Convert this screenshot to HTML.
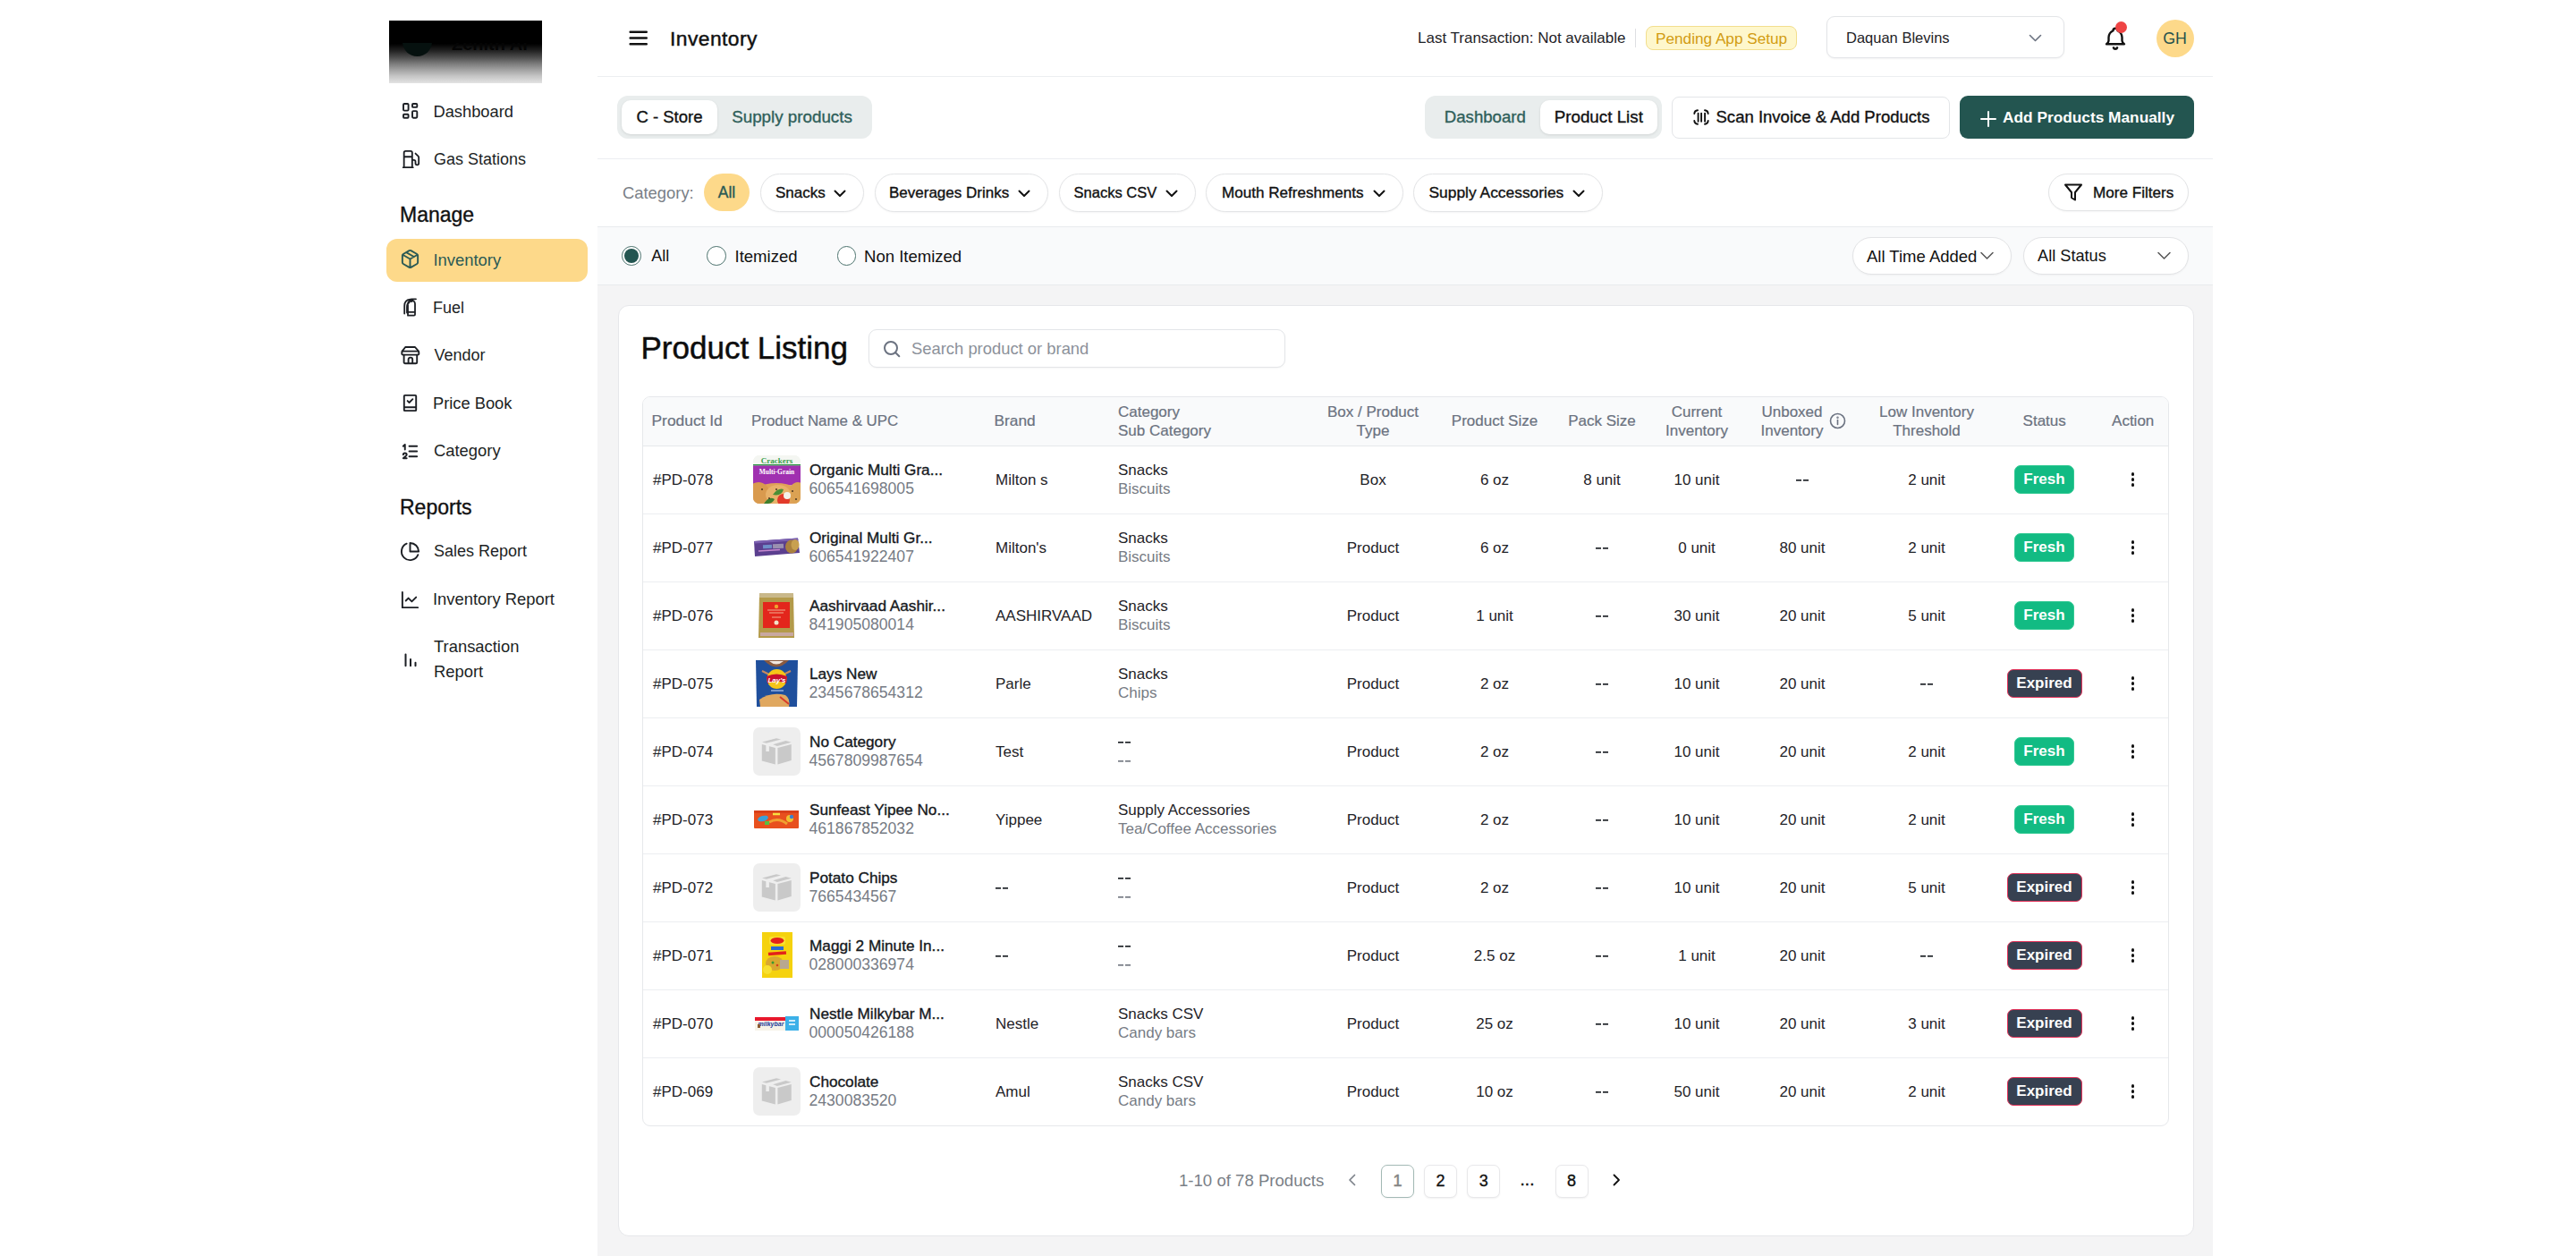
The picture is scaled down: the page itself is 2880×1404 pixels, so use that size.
<!DOCTYPE html><html><head><meta charset="utf-8"><style>
html,body{margin:0;padding:0}
body{width:2880px;height:1404px;overflow:hidden;position:relative;background:#fff;font-family:"Liberation Sans",sans-serif;}
.t{position:absolute;white-space:nowrap}
.b{position:absolute;box-sizing:border-box}
.m{-webkit-text-stroke:0.35px currentColor}
.sb{font-weight:700}
</style></head><body>
<div class="b" style="left:435px;top:23px;width:171px;height:70px;background:linear-gradient(180deg,#000 0%,#000 37%,#1e1e1e 47%,#4a4a4a 58%,#7c7c7c 69%,#a3a3a3 79%,#c6c6c6 89%,#e3e3e3 100%);"></div>
<div class="b" style="left:435px;top:48px;width:171px;height:16px;overflow:hidden"><div class="b" style="left:14.5px;top:-18.5px;width:33px;height:33px;border-radius:50%;background:#06110f"></div><div class="t sb" style="left:70px;top:-11px;font-size:20px;line-height:24px;color:#050505">Zenith AI</div></div>
<svg class="b" style="left:446px;top:110px;color:#1c1f24;stroke-width:1.9px;" width="26" height="26" viewBox="446 110 26 26" fill="none" stroke="currentColor" stroke-linecap="round" stroke-linejoin="round"><rect x="451" y="116" width="5.6" height="7.6" rx="1.1"/><rect x="461" y="116" width="5.3" height="3.9" rx="0.9"/><rect x="451" y="127.8" width="5.6" height="3.9" rx="0.9"/><rect x="461" y="124.1" width="5.3" height="7.6" rx="1.1"/></svg>
<div class="t " style="left:484.5px;top:113.3px;font-size:18.3px;line-height:23px;color:#1c1f24;">Dashboard</div>
<svg class="b" style="left:447.5px;top:166.5px;color:#1c1f24;" width="22" height="22" viewBox="0 0 24 24" fill="none" stroke="currentColor" stroke-linecap="round" stroke-linejoin="round"><path d="M3 22h12 M4 9h10 M14 22V4a2 2 0 0 0-2-2H6a2 2 0 0 0-2 2v18 M14 13h2a2 2 0 0 1 2 2v2a2 2 0 0 0 2 2a2 2 0 0 0 2-2V9.83a2 2 0 0 0-.59-1.42L18 5" stroke-width="2"/></svg>
<div class="t " style="left:485px;top:166.5px;font-size:18px;line-height:22px;color:#1c1f24;">Gas Stations</div>
<div class="t m" style="left:447px;top:225.5px;font-size:23px;line-height:29px;color:#111;">Manage</div>
<div class="b" style="left:432px;top:266.5px;width:225px;height:48.5px;background:#fdd98a;border-radius:12px;"></div>
<svg class="b" style="left:447px;top:278px;color:#2b5a55;" width="23" height="23" viewBox="0 0 24 24" fill="none" stroke="currentColor" stroke-linecap="round" stroke-linejoin="round"><path d="m7.5 4.27 9 5.15 M21 8a2 2 0 0 0-1-1.73l-7-4a2 2 0 0 0-2 0l-7 4A2 2 0 0 0 3 8v8a2 2 0 0 0 1 1.73l7 4a2 2 0 0 0 2 0l7-4A2 2 0 0 0 21 16Z M3.3 7l8.7 5 8.7-5 M12 22V12" stroke-width="2"/></svg>
<div class="t " style="left:484.5px;top:278.7px;font-size:18.4px;line-height:23px;color:#2b5a55;">Inventory</div>
<svg class="b" style="left:446px;top:328px;color:#1c1f24;stroke-width:1.8px;" width="26" height="28" viewBox="446 328 26 28" fill="none" stroke="currentColor" stroke-linecap="round" stroke-linejoin="round"><path d="M456 352.7V339.8A4 4 0 0 1 464 339.8V351.6a1.1 1.1 0 0 1-1.1 1.1H457.1a1.1 1.1 0 0 1-1.1-1.1Z M456 348.8H464 M459.8 334.3H465 M458.6 334.6Q452.2 335.2 452.2 342V350.6 M455 349.5V343.2Q455 339.2 457.8 337.6"/><circle cx="459.8" cy="336" r="1.2"/></svg>
<div class="t " style="left:484px;top:332.8px;font-size:18px;line-height:22px;color:#1c1f24;">Fuel</div>
<svg class="b" style="left:446px;top:384px;color:#1c1f24;stroke-width:1.9px;" width="25" height="25" viewBox="446 384 25 25" fill="none" stroke="currentColor" stroke-linecap="round" stroke-linejoin="round"><path d="M449.6 392.6L453.2 388H464L468 392.6 M451.6 396.6V405a1.3 1.3 0 0 0 1.3 1.3H464.9a1.3 1.3 0 0 0 1.3-1.3V396.6 M456.6 406.3V401.9a2.3 2.3 0 0 1 4.6 0V406.3"/><rect x="449.3" y="392.6" width="19" height="4" rx="1.2"/></svg>
<div class="t " style="left:485.5px;top:386.4px;font-size:18px;line-height:22px;color:#1c1f24;">Vendor</div>
<svg class="b" style="left:447px;top:439px;color:#1c1f24;" width="23" height="23" viewBox="0 0 24 24" fill="none" stroke="currentColor" stroke-linecap="round" stroke-linejoin="round"><path d="M5 4a1 1 0 0 1 1-1h12a1 1 0 0 1 1 1v16a1 1 0 0 1-1 1H6a1 1 0 0 1-1-1z M5 17h14 M9 9.5l2 2 4-4" stroke-width="2"/></svg>
<div class="t " style="left:484px;top:438.8px;font-size:18.3px;line-height:23px;color:#1c1f24;">Price Book</div>
<svg class="b" style="left:447px;top:493px;color:#1c1f24;" width="23" height="23" viewBox="0 0 24 24" fill="none" stroke="currentColor" stroke-linecap="round" stroke-linejoin="round"><path d="M11 6h9 M11 12h9 M11 18h9 M4 16a2 2 0 1 1 4 0c0 .6-.5 1-1 1.5L4 20h4 M6 10V4L4 6" stroke-width="2"/></svg>
<div class="t " style="left:485px;top:492.3px;font-size:18.4px;line-height:23px;color:#1c1f24;">Category</div>
<div class="t m" style="left:447px;top:552.5px;font-size:23px;line-height:29px;color:#111;">Reports</div>
<svg class="b" style="left:447px;top:605px;color:#1c1f24;" width="23" height="23" viewBox="0 0 24 24" fill="none" stroke="currentColor" stroke-linecap="round" stroke-linejoin="round"><path d="M21.21 15.89A10 10 0 1 1 8 2.83 M22 12A10 10 0 0 0 12 2v10z" stroke-width="2"/></svg>
<div class="t " style="left:485px;top:605.3px;font-size:18px;line-height:22px;color:#1c1f24;">Sales Report</div>
<svg class="b" style="left:447px;top:659px;color:#1c1f24;" width="23" height="23" viewBox="0 0 24 24" fill="none" stroke="currentColor" stroke-linecap="round" stroke-linejoin="round"><path d="M3 3v18h18 M19 9l-5 5-4-4-3 3" stroke-width="2"/></svg>
<div class="t " style="left:484px;top:658.3px;font-size:18.4px;line-height:23px;color:#1c1f24;">Inventory Report</div>
<svg class="b" style="left:448px;top:726px;color:#1c1f24;" width="22" height="22" viewBox="0 0 24 24" fill="none" stroke="currentColor" stroke-linecap="round" stroke-linejoin="round"><path d="M6 20V6 M12 20v-8 M18 20v-4" stroke-width="2.2"/></svg>
<div class="t " style="left:485px;top:711.4px;font-size:18.4px;line-height:23px;color:#1c1f24;">Transaction</div>
<div class="t " style="left:485px;top:738.5px;font-size:18.4px;line-height:23px;color:#1c1f24;">Report</div>
<div class="b" style="left:668px;top:318px;width:1806px;height:1086px;background:#f4f4f5;"></div>
<div class="b" style="left:668px;top:253px;width:1806px;height:66px;background:#f9fafb;border-top:1px solid #e8eaed;border-bottom:1px solid #e8eaed;"></div>
<div class="b" style="left:668px;top:85px;width:1806px;height:1px;background:#eceef1;"></div>
<div class="b" style="left:668px;top:177px;width:1806px;height:1px;background:#eceef1;"></div>
<svg class="b" style="left:700px;top:29px;color:#111;" width="27" height="27" viewBox="0 0 24 24" fill="none" stroke="currentColor" stroke-linecap="round" stroke-linejoin="round"><path d="M4.1 6h16.2 M4.1 12h16.2 M4.1 18h16.2" stroke-width="2.1"/></svg>
<div class="t m" style="left:749px;top:28.5px;font-size:22.8px;line-height:28px;color:#111;letter-spacing:0.45px;-webkit-text-stroke:0.45px #111;">Inventory</div>
<div class="t " style="left:1585px;top:31.5px;font-size:17px;line-height:21px;color:#1f2328;">Last Transaction: Not available</div>
<div class="b" style="left:1828px;top:32px;width:1px;height:21px;background:#dedfe2;"></div>
<div class="b" style="left:1840px;top:29px;width:169px;height:27px;background:#fef7cc;border:1px solid #f2de8d;border-radius:8px;"></div>
<div class="t " style="left:1851px;top:31.5px;font-size:17.2px;line-height:22px;color:#d29c12;">Pending App Setup</div>
<div class="b" style="left:2042px;top:18px;width:266px;height:47px;background:#fff;border:1px solid #e3e5e8;border-radius:9px;box-shadow:0 1px 2px rgba(0,0,0,.05);"></div>
<div class="t " style="left:2064px;top:32.0px;font-size:16.5px;line-height:21px;color:#1f2328;">Daquan Blevins</div>
<svg class="b" style="left:2266px;top:35px;color:#6b7280;" width="19" height="15" viewBox="0 0 19 15" fill="none" stroke="currentColor" stroke-linecap="round" stroke-linejoin="round"><path d="M3.5 4.5l6 6 6-6" stroke-width="1.6"/></svg>
<svg class="b" style="left:2350px;top:28px;color:#111;" width="30" height="30" viewBox="0 0 24 24" fill="none" stroke="currentColor" stroke-linecap="round" stroke-linejoin="round"><path d="M10 5a2 2 0 1 1 4 0a7 7 0 0 1 4 6v3a4 4 0 0 0 2 3h-16a4 4 0 0 0 2-3v-3a7 7 0 0 1 4-6 M10.3 20.2a1.8 1.8 0 0 0 3.4 0" stroke-width="1.9"/></svg>
<div class="b" style="left:2365px;top:24px;width:13px;height:13px;background:#ef4444;border-radius:50%;"></div>
<div class="b" style="left:2410.5px;top:21.5px;width:42.0px;height:42.0px;background:#fdd98a;border-radius:50%;"></div>
<div class="t " style="left:1931.5px;width:1000px;text-align:center;top:31.5px;font-size:17.8px;line-height:22px;color:#24514d;">GH</div>
<div class="b" style="left:690px;top:107px;width:285px;height:48px;background:#e9eded;border-radius:12px;"></div>
<div class="b" style="left:695px;top:112px;width:107px;height:38px;background:#fff;border-radius:10px;box-shadow:0 1px 3px rgba(0,0,0,.10);"></div>
<div class="t m" style="left:248.5px;width:1000px;text-align:center;top:119.3px;font-size:18.5px;line-height:23px;color:#111;">C - Store</div>
<div class="t m" style="left:385.5px;width:1000px;text-align:center;top:118.8px;font-size:18.8px;line-height:24px;color:#2f5f5a;">Supply products</div>
<div class="b" style="left:1593px;top:107px;width:265px;height:48px;background:#e9eded;border-radius:12px;"></div>
<div class="b" style="left:1721.5px;top:112px;width:131.5px;height:38px;background:#fff;border-radius:10px;box-shadow:0 1px 3px rgba(0,0,0,.10);"></div>
<div class="t m" style="left:1160.3px;width:1000px;text-align:center;top:119.3px;font-size:18.6px;line-height:23px;color:#2f5f5a;">Dashboard</div>
<div class="t m" style="left:1287.3px;width:1000px;text-align:center;top:118.8px;font-size:18.8px;line-height:24px;color:#111;">Product List</div>
<div class="b" style="left:1869px;top:107.5px;width:311px;height:47.5px;background:#fff;border:1px solid #e3e5e8;border-radius:8px;"></div>
<svg class="b" style="left:1893px;top:122px;color:#111;" width="18" height="18" viewBox="0 0 18 18" fill="none" stroke="currentColor" stroke-linecap="round" stroke-linejoin="round"><path d="M1.3 5A4 4 0 0 1 5 1.3 M13 1.3A4 4 0 0 1 16.7 5 M1.3 13A4 4 0 0 0 5 16.7 M13 16.7A4 4 0 0 0 16.7 13 M5.6 4.6v9.2 M9.1 4.6v9.2 M13.1 4.6v9.2" stroke-width="1.9"/></svg>
<div class="t m" style="left:1918.5px;top:119.3px;font-size:18.55px;line-height:23px;color:#111;">Scan Invoice &amp; Add Products</div>
<div class="b" style="left:2191px;top:107px;width:262px;height:48px;background:#235550;border-radius:9px;"></div>
<svg class="b" style="left:2212px;top:122px;color:#fff;" width="22" height="22" viewBox="0 0 22 22" fill="none" stroke="currentColor" stroke-linecap="round" stroke-linejoin="round"><path d="M11 3v16 M3 11h16" stroke-width="2"/></svg>
<div class="t sb" style="left:2239px;top:119.8px;font-size:17.3px;line-height:22px;color:#fff;">Add Products Manually</div>
<div class="t " style="left:696px;top:203.8px;font-size:18.4px;line-height:23px;color:#7a7f87;">Category:</div>
<div class="b" style="left:787px;top:194px;width:51px;height:42px;background:#fdd98a;border-radius:21px;"></div>
<div class="t m" style="left:312.5px;width:1000px;text-align:center;top:204.3px;font-size:17.5px;line-height:22px;color:#2b5a55;">All</div>
<div class="b" style="left:849.5px;top:194px;width:116.5px;height:42.5px;background:#fff;border:1px solid #e3e4e6;border-radius:22px;box-shadow:0 1px 2px rgba(0,0,0,.04);"></div>
<div class="t m" style="left:867.0px;top:204.8px;font-size:17px;line-height:21px;color:#111;">Snacks</div>
<svg class="b" style="left:930px;top:207px;color:#111;" width="18" height="18" viewBox="0 0 18 18" fill="none" stroke="currentColor" stroke-linecap="round" stroke-linejoin="round"><path d="M3.5 6.5l5.5 5.5 5.5-5.5" stroke-width="2"/></svg>
<div class="b" style="left:978px;top:194px;width:194px;height:42.5px;background:#fff;border:1px solid #e3e4e6;border-radius:22px;box-shadow:0 1px 2px rgba(0,0,0,.04);"></div>
<div class="t m" style="left:994px;top:204.8px;font-size:17px;line-height:21px;color:#111;">Beverages Drinks</div>
<svg class="b" style="left:1136px;top:207px;color:#111;" width="18" height="18" viewBox="0 0 18 18" fill="none" stroke="currentColor" stroke-linecap="round" stroke-linejoin="round"><path d="M3.5 6.5l5.5 5.5 5.5-5.5" stroke-width="2"/></svg>
<div class="b" style="left:1184px;top:194px;width:153px;height:42.5px;background:#fff;border:1px solid #e3e4e6;border-radius:22px;box-shadow:0 1px 2px rgba(0,0,0,.04);"></div>
<div class="t m" style="left:1200.6px;top:204.8px;font-size:16.5px;line-height:21px;color:#111;">Snacks CSV</div>
<svg class="b" style="left:1301px;top:207px;color:#111;" width="18" height="18" viewBox="0 0 18 18" fill="none" stroke="currentColor" stroke-linecap="round" stroke-linejoin="round"><path d="M3.5 6.5l5.5 5.5 5.5-5.5" stroke-width="2"/></svg>
<div class="b" style="left:1348px;top:194px;width:221px;height:42.5px;background:#fff;border:1px solid #e3e4e6;border-radius:22px;box-shadow:0 1px 2px rgba(0,0,0,.04);"></div>
<div class="t m" style="left:1365.9px;top:204.8px;font-size:17.1px;line-height:21px;color:#111;">Mouth Refreshments</div>
<svg class="b" style="left:1533px;top:207px;color:#111;" width="18" height="18" viewBox="0 0 18 18" fill="none" stroke="currentColor" stroke-linecap="round" stroke-linejoin="round"><path d="M3.5 6.5l5.5 5.5 5.5-5.5" stroke-width="2"/></svg>
<div class="b" style="left:1580px;top:194px;width:212px;height:42.5px;background:#fff;border:1px solid #e3e4e6;border-radius:22px;box-shadow:0 1px 2px rgba(0,0,0,.04);"></div>
<div class="t m" style="left:1597.5px;top:204.3px;font-size:17.4px;line-height:22px;color:#111;">Supply Accessories</div>
<svg class="b" style="left:1756px;top:207px;color:#111;" width="18" height="18" viewBox="0 0 18 18" fill="none" stroke="currentColor" stroke-linecap="round" stroke-linejoin="round"><path d="M3.5 6.5l5.5 5.5 5.5-5.5" stroke-width="2"/></svg>
<div class="b" style="left:2290px;top:194px;width:157px;height:42px;background:#fff;border:1px solid #e3e4e6;border-radius:22px;box-shadow:0 1px 2px rgba(0,0,0,.04);"></div>
<svg class="b" style="left:2306px;top:203px;color:#111;" width="24" height="24" viewBox="0 0 24 24" fill="none" stroke="currentColor" stroke-linecap="round" stroke-linejoin="round"><path d="M3 3.5h18l-7 8.5v8.5l-4-2.5v-6z" stroke-width="2"/></svg>
<div class="t m" style="left:2340px;top:204.8px;font-size:17.1px;line-height:21px;color:#111;">More Filters</div>
<div class="b" style="left:695.0px;top:275.0px;width:21.600000000000023px;height:21.600000000000023px;border:1.5px solid #4a716c;border-radius:50%;background:#fff;"></div>
<div class="b" style="left:697.6px;top:277.6px;width:16.399999999999977px;height:16.399999999999977px;background:#235550;border-radius:50%;"></div>
<div class="t " style="left:728.3px;top:275.0px;font-size:18px;line-height:22px;color:#111;">All</div>
<div class="b" style="left:790.2px;top:275.0px;width:21.59999999999991px;height:21.600000000000023px;border:1.6px solid #4a716c;border-radius:50%;background:#fff;"></div>
<div class="t " style="left:821.5px;top:274.5px;font-size:18.55px;line-height:23px;color:#111;">Itemized</div>
<div class="b" style="left:935.5px;top:275.0px;width:21.59999999999991px;height:21.600000000000023px;border:1.6px solid #4a716c;border-radius:50%;background:#fff;"></div>
<div class="t " style="left:966px;top:274.5px;font-size:18.55px;line-height:23px;color:#111;">Non Itemized</div>
<div class="b" style="left:2071px;top:265px;width:178px;height:41.5px;background:#fff;border:1px solid #e3e4e6;border-radius:21px;box-shadow:0 1px 2px rgba(0,0,0,.04);"></div>
<div class="t " style="left:2087px;top:274.5px;font-size:18.5px;line-height:23px;color:#111;">All Time Added</div>
<svg class="b" style="left:2212px;top:278px;color:#555;" width="19" height="15" viewBox="0 0 19 15" fill="none" stroke="currentColor" stroke-linecap="round" stroke-linejoin="round"><path d="M3 4.5l6.5 6.5 6.5-6.5" stroke-width="1.5"/></svg>
<div class="b" style="left:2262px;top:265px;width:184.5px;height:41.5px;background:#fff;border:1px solid #e3e4e6;border-radius:21px;box-shadow:0 1px 2px rgba(0,0,0,.04);"></div>
<div class="t " style="left:2278px;top:274.5px;font-size:18.2px;line-height:23px;color:#111;">All Status</div>
<svg class="b" style="left:2410px;top:278px;color:#555;" width="19" height="15" viewBox="0 0 19 15" fill="none" stroke="currentColor" stroke-linecap="round" stroke-linejoin="round"><path d="M3 4.5l6.5 6.5 6.5-6.5" stroke-width="1.5"/></svg>
<div class="b" style="left:690.5px;top:340.5px;width:1762.0px;height:1041.0px;background:#fff;border:1px solid #e6e7ea;border-radius:12px;"></div>
<div class="t m" style="left:716.5px;top:367.0px;font-size:35px;line-height:44px;color:#0d0d0d;-webkit-text-stroke:0.5px #0d0d0d;">Product Listing</div>
<div class="b" style="left:971px;top:368px;width:466px;height:42.5px;background:#fff;border:1px solid #e3e5e8;border-radius:9px;box-shadow:0 1px 2px rgba(0,0,0,.04);"></div>
<svg class="b" style="left:985px;top:378px;color:#6b7280;stroke-width:2;" width="24" height="24" viewBox="0 0 24 24" fill="none" stroke="currentColor" stroke-linecap="round" stroke-linejoin="round"><circle cx="11" cy="11" r="7"/><path d="M20.3 20.3l-4.3-4.3" /></svg>
<div class="t " style="left:1019px;top:377.7px;font-size:18.4px;line-height:23px;color:#8c919a;">Search product or brand</div>
<div class="b" style="left:718px;top:443px;width:1707px;height:815.5px;background:#fff;border:1px solid #e6e8eb;border-radius:9px;overflow:hidden;"></div>
<div class="b" style="left:719px;top:444px;width:1705px;height:54.5px;background:#f9fafb;border-radius:8px 8px 0 0;border-bottom:1px solid #e6e8eb;"></div>
<div class="t m" style="left:728.5px;top:459.2px;font-size:17.4px;line-height:22px;color:#6b7280;-webkit-text-stroke:0.2px;">Product Id</div>
<div class="t m" style="left:840px;top:459.7px;font-size:16.9px;line-height:21px;color:#6b7280;-webkit-text-stroke:0.2px;">Product Name &amp; UPC</div>
<div class="t m" style="left:1111.5px;top:459.2px;font-size:17.3px;line-height:22px;color:#6b7280;-webkit-text-stroke:0.2px;">Brand</div>
<div class="t m" style="left:1250px;top:449.5px;font-size:17px;line-height:21px;color:#6b7280;-webkit-text-stroke:0.2px;">Category</div>
<div class="t m" style="left:1250px;top:470.5px;font-size:17px;line-height:21px;color:#6b7280;-webkit-text-stroke:0.2px;">Sub Category</div>
<div class="t m" style="left:1035px;width:1000px;text-align:center;top:449.5px;font-size:17px;line-height:21px;color:#6b7280;-webkit-text-stroke:0.2px;">Box / Product</div>
<div class="t m" style="left:1035px;width:1000px;text-align:center;top:470.5px;font-size:17px;line-height:21px;color:#6b7280;-webkit-text-stroke:0.2px;">Type</div>
<div class="t m" style="left:1397px;width:1000px;text-align:center;top:449.5px;font-size:17px;line-height:21px;color:#6b7280;-webkit-text-stroke:0.2px;">Current</div>
<div class="t m" style="left:1397px;width:1000px;text-align:center;top:470.5px;font-size:17px;line-height:21px;color:#6b7280;-webkit-text-stroke:0.2px;">Inventory</div>
<div class="t m" style="left:1503.5px;width:1000px;text-align:center;top:449.5px;font-size:17px;line-height:21px;color:#6b7280;-webkit-text-stroke:0.2px;">Unboxed</div>
<div class="t m" style="left:1503.5px;width:1000px;text-align:center;top:470.5px;font-size:17px;line-height:21px;color:#6b7280;-webkit-text-stroke:0.2px;">Inventory</div>
<div class="t m" style="left:1654px;width:1000px;text-align:center;top:449.5px;font-size:17px;line-height:21px;color:#6b7280;-webkit-text-stroke:0.2px;">Low Inventory</div>
<div class="t m" style="left:1654px;width:1000px;text-align:center;top:470.5px;font-size:17px;line-height:21px;color:#6b7280;-webkit-text-stroke:0.2px;">Threshold</div>
<div class="t m" style="left:1171px;width:1000px;text-align:center;top:459.7px;font-size:17px;line-height:21px;color:#6b7280;-webkit-text-stroke:0.2px;">Product Size</div>
<div class="t m" style="left:1291px;width:1000px;text-align:center;top:459.7px;font-size:17px;line-height:21px;color:#6b7280;-webkit-text-stroke:0.2px;">Pack Size</div>
<div class="t m" style="left:1785.6999999999998px;width:1000px;text-align:center;top:459.7px;font-size:17px;line-height:21px;color:#6b7280;-webkit-text-stroke:0.2px;">Status</div>
<div class="t m" style="left:1884.6999999999998px;width:1000px;text-align:center;top:459.7px;font-size:17px;line-height:21px;color:#6b7280;-webkit-text-stroke:0.2px;">Action</div>
<svg class="b" style="left:2045px;top:461px;color:#6b7280;stroke-width:1.6;" width="19" height="19" viewBox="0 0 19 19" fill="none" stroke="currentColor" stroke-linecap="round" stroke-linejoin="round"><circle cx="9.5" cy="9.5" r="8"/><path d="M9.5 8.5v5" /><circle cx="9.5" cy="5.8" r="0.4" fill="currentColor"/></svg>
<div class="b" style="left:719px;top:573.5px;width:1705px;height:1.0px;background:#eceef1;"></div>
<div class="t " style="left:730px;top:525.5px;font-size:17px;line-height:21px;color:#1f2328;">#PD-078</div>
<svg class="b" style="left:842px;top:509px" width="53" height="54" viewBox="0 0 53 54">
<defs><clipPath id="cr"><rect x="0" y="0" width="53" height="54" rx="7"/></clipPath></defs>
<g clip-path="url(#cr)">
<rect width="53" height="54" fill="#f2f4ef"/>
<rect y="0" width="53" height="10" fill="#f4f6f2"/>
<text x="26.5" y="8.5" font-family="Liberation Serif" font-size="9" fill="#3aa04a" text-anchor="middle" font-weight="700">Crackers</text>
<rect y="10" width="53" height="1.6" fill="#2d9a45"/>
<rect y="11.5" width="53" height="22" fill="#a030b0"/>
<text x="26.5" y="21" font-family="Liberation Serif" font-size="7.5" fill="#fff" text-anchor="middle" font-weight="700">Multi-Grain</text>
<ellipse cx="26" cy="46" rx="30" ry="15" fill="#e0a258"/>
<ellipse cx="6" cy="42" rx="12" ry="12" fill="#d99a4e"/>
<ellipse cx="50" cy="42" rx="10" ry="12" fill="#dba253"/>
<ellipse cx="28" cy="44" rx="14" ry="11" fill="#e8b26a"/>
<circle cx="34" cy="50" r="7" fill="#e23a2a"/>
<circle cx="38" cy="45" r="4" fill="#f4f2ea"/>
<path d="M22 44 q6 -8 12 -6 q-2 8 -12 6z" fill="#4a8f35"/>
<path d="M12 54 q6 -9 12 -5 q-3 6 -12 5z" fill="#3f7f2e"/>
<circle cx="10" cy="38" r="0.9" fill="#3a2a1a"/><circle cx="18" cy="48" r="0.9" fill="#3a2a1a"/><circle cx="44" cy="40" r="0.9" fill="#3a2a1a"/><circle cx="48" cy="49" r="0.9" fill="#3a2a1a"/><circle cx="26" cy="38" r="0.9" fill="#3a2a1a"/>
</g></svg>
<div class="t m" style="left:905px;top:514.2px;font-size:17.2px;line-height:22px;color:#15181c;">Organic Multi Gra...</div>
<div class="t " style="left:904.5px;top:535.0px;font-size:17.6px;line-height:22px;color:#767b84;">606541698005</div>
<div class="t " style="left:1113px;top:525.5px;font-size:17px;line-height:21px;color:#1f2328;">Milton s</div>
<div class="t " style="left:1250px;top:514.7px;font-size:17px;line-height:21px;color:#1f2328;">Snacks</div>
<div class="t " style="left:1250px;top:535.5px;font-size:17px;line-height:21px;color:#767b84;">Biscuits</div>
<div class="t " style="left:1035px;width:1000px;text-align:center;top:525.5px;font-size:17px;line-height:21px;color:#1f2328;">Box</div>
<div class="t " style="left:1171px;width:1000px;text-align:center;top:525.5px;font-size:17px;line-height:21px;color:#1f2328;">6 oz</div>
<div class="t " style="left:1291px;width:1000px;text-align:center;top:525.5px;font-size:17px;line-height:21px;color:#1f2328;">8 unit</div>
<div class="t " style="left:1397px;width:1000px;text-align:center;top:525.5px;font-size:17px;line-height:21px;color:#1f2328;">10 unit</div>
<div class="t " style="left:1515px;width:1000px;text-align:center;top:525.5px;font-size:17px;line-height:21px;color:#1f2328;"><span style="display:inline-block;width:14px;height:12px;vertical-align:baseline;background:linear-gradient(currentColor,currentColor) 0 6.3px/6px 1.7px no-repeat,linear-gradient(currentColor,currentColor) 7.6px 6.3px/6px 1.7px no-repeat"></span></div>
<div class="t " style="left:1654px;width:1000px;text-align:center;top:525.5px;font-size:17px;line-height:21px;color:#1f2328;">2 unit</div>
<div class="b" style="left:2252px;top:519.8px;width:67px;height:32.0px;background:#12bb83;border:1px solid #34ca94;border-radius:7px;"></div>
<div class="t sb" style="left:1785.5px;width:1000px;text-align:center;top:524.8px;font-size:17px;line-height:21px;color:#fff;">Fresh</div>
<div class="b" style="left:2382.6px;top:528.15px;width:3.800000000000182px;height:3.900000000000091px;background:#111;border-radius:50%;"></div>
<div class="b" style="left:2382.6px;top:534.05px;width:3.800000000000182px;height:3.900000000000091px;background:#111;border-radius:50%;"></div>
<div class="b" style="left:2382.6px;top:539.9499999999999px;width:3.800000000000182px;height:3.900000000000091px;background:#111;border-radius:50%;"></div>
<div class="b" style="left:719px;top:649.5px;width:1705px;height:1.0px;background:#eceef1;"></div>
<div class="t " style="left:730px;top:601.5px;font-size:17px;line-height:21px;color:#1f2328;">#PD-077</div>
<svg class="b" style="left:842px;top:600px" width="53" height="24" viewBox="0 0 53 24">
<path d="M1 5 L50 1.5 L52 18 L2 22 Z" fill="#5b3f8f"/>
<path d="M1 5 L50 1.5 L50.5 4 L1.5 7.5Z" fill="#7a5fb0"/>
<rect x="11" y="9" width="10" height="4" fill="#6f8fc8" transform="rotate(-3 16 11)"/>
<rect x="22" y="8" width="12" height="5" fill="#9a90b0" transform="rotate(-3 28 10)"/>
<path d="M6 16 L30 14.5" stroke="#c88bd0" stroke-width="1.5"/>
<ellipse cx="43" cy="11" rx="7" ry="7.5" fill="#a9803f"/>
<ellipse cx="47" cy="9" rx="4.5" ry="6" fill="#c8a050"/>
</svg>
<div class="t m" style="left:905px;top:590.2px;font-size:17.2px;line-height:22px;color:#15181c;">Original Multi Gr...</div>
<div class="t " style="left:904.5px;top:611.0px;font-size:17.6px;line-height:22px;color:#767b84;">606541922407</div>
<div class="t " style="left:1113px;top:601.5px;font-size:17px;line-height:21px;color:#1f2328;">Milton's</div>
<div class="t " style="left:1250px;top:590.7px;font-size:17px;line-height:21px;color:#1f2328;">Snacks</div>
<div class="t " style="left:1250px;top:611.5px;font-size:17px;line-height:21px;color:#767b84;">Biscuits</div>
<div class="t " style="left:1035px;width:1000px;text-align:center;top:601.5px;font-size:17px;line-height:21px;color:#1f2328;">Product</div>
<div class="t " style="left:1171px;width:1000px;text-align:center;top:601.5px;font-size:17px;line-height:21px;color:#1f2328;">6 oz</div>
<div class="t " style="left:1291px;width:1000px;text-align:center;top:601.5px;font-size:17px;line-height:21px;color:#1f2328;"><span style="display:inline-block;width:14px;height:12px;vertical-align:baseline;background:linear-gradient(currentColor,currentColor) 0 6.3px/6px 1.7px no-repeat,linear-gradient(currentColor,currentColor) 7.6px 6.3px/6px 1.7px no-repeat"></span></div>
<div class="t " style="left:1397px;width:1000px;text-align:center;top:601.5px;font-size:17px;line-height:21px;color:#1f2328;">0 unit</div>
<div class="t " style="left:1515px;width:1000px;text-align:center;top:601.5px;font-size:17px;line-height:21px;color:#1f2328;">80 unit</div>
<div class="t " style="left:1654px;width:1000px;text-align:center;top:601.5px;font-size:17px;line-height:21px;color:#1f2328;">2 unit</div>
<div class="b" style="left:2252px;top:595.8px;width:67px;height:32.0px;background:#12bb83;border:1px solid #34ca94;border-radius:7px;"></div>
<div class="t sb" style="left:1785.5px;width:1000px;text-align:center;top:600.8px;font-size:17px;line-height:21px;color:#fff;">Fresh</div>
<div class="b" style="left:2382.6px;top:604.15px;width:3.800000000000182px;height:3.900000000000091px;background:#111;border-radius:50%;"></div>
<div class="b" style="left:2382.6px;top:610.05px;width:3.800000000000182px;height:3.900000000000091px;background:#111;border-radius:50%;"></div>
<div class="b" style="left:2382.6px;top:615.9499999999999px;width:3.800000000000182px;height:3.900000000000091px;background:#111;border-radius:50%;"></div>
<div class="b" style="left:719px;top:725.5px;width:1705px;height:1.0px;background:#eceef1;"></div>
<div class="t " style="left:730px;top:677.5px;font-size:17px;line-height:21px;color:#1f2328;">#PD-076</div>
<svg class="b" style="left:842px;top:661px" width="53" height="54" viewBox="0 0 53 54">
<path d="M7 2 L45 2 L46 52 L6 52 Z" fill="#b39a4a"/>
<rect x="7" y="2" width="38" height="5" fill="#c9b88a"/>
<rect x="8" y="46" width="37" height="4" fill="#c8a8a0"/>
<rect x="11" y="12" width="30" height="29" fill="#e3261c"/>
<circle cx="26" cy="17" r="2.2" fill="#f0a030"/>
<path d="M16 21h20 M18 24h16 M21 29h10" stroke="#f6d0b0" stroke-width="0.8"/>
<circle cx="26" cy="35" r="2.5" fill="#f2e2c8"/>
</svg>
<div class="t m" style="left:905px;top:666.2px;font-size:17.2px;line-height:22px;color:#15181c;">Aashirvaad Aashir...</div>
<div class="t " style="left:904.5px;top:687.0px;font-size:17.6px;line-height:22px;color:#767b84;">841905080014</div>
<div class="t " style="left:1113px;top:677.5px;font-size:17px;line-height:21px;color:#1f2328;">AASHIRVAAD</div>
<div class="t " style="left:1250px;top:666.7px;font-size:17px;line-height:21px;color:#1f2328;">Snacks</div>
<div class="t " style="left:1250px;top:687.5px;font-size:17px;line-height:21px;color:#767b84;">Biscuits</div>
<div class="t " style="left:1035px;width:1000px;text-align:center;top:677.5px;font-size:17px;line-height:21px;color:#1f2328;">Product</div>
<div class="t " style="left:1171px;width:1000px;text-align:center;top:677.5px;font-size:17px;line-height:21px;color:#1f2328;">1 unit</div>
<div class="t " style="left:1291px;width:1000px;text-align:center;top:677.5px;font-size:17px;line-height:21px;color:#1f2328;"><span style="display:inline-block;width:14px;height:12px;vertical-align:baseline;background:linear-gradient(currentColor,currentColor) 0 6.3px/6px 1.7px no-repeat,linear-gradient(currentColor,currentColor) 7.6px 6.3px/6px 1.7px no-repeat"></span></div>
<div class="t " style="left:1397px;width:1000px;text-align:center;top:677.5px;font-size:17px;line-height:21px;color:#1f2328;">30 unit</div>
<div class="t " style="left:1515px;width:1000px;text-align:center;top:677.5px;font-size:17px;line-height:21px;color:#1f2328;">20 unit</div>
<div class="t " style="left:1654px;width:1000px;text-align:center;top:677.5px;font-size:17px;line-height:21px;color:#1f2328;">5 unit</div>
<div class="b" style="left:2252px;top:671.8px;width:67px;height:32.0px;background:#12bb83;border:1px solid #34ca94;border-radius:7px;"></div>
<div class="t sb" style="left:1785.5px;width:1000px;text-align:center;top:676.8px;font-size:17px;line-height:21px;color:#fff;">Fresh</div>
<div class="b" style="left:2382.6px;top:680.15px;width:3.800000000000182px;height:3.900000000000091px;background:#111;border-radius:50%;"></div>
<div class="b" style="left:2382.6px;top:686.05px;width:3.800000000000182px;height:3.900000000000091px;background:#111;border-radius:50%;"></div>
<div class="b" style="left:2382.6px;top:691.9499999999999px;width:3.800000000000182px;height:3.900000000000091px;background:#111;border-radius:50%;"></div>
<div class="b" style="left:719px;top:801.5px;width:1705px;height:1.0px;background:#eceef1;"></div>
<div class="t " style="left:730px;top:753.5px;font-size:17px;line-height:21px;color:#1f2328;">#PD-075</div>
<svg class="b" style="left:842px;top:737px" width="53" height="54" viewBox="0 0 53 54">
<path d="M3 1 L50 1 L49 53 L4 53 Z" fill="#1f4f9c"/>
<path d="M12 1 Q26 16 40 1 Z" fill="#8a5a40"/>
<path d="M18 2 Q26 9 34 2 Z" fill="#f2e8e0"/>
<path d="M10 13 L18 17 M42 13 L34 17" stroke="#c68a60" stroke-width="2"/>
<circle cx="26.5" cy="22" r="11" fill="#f5c518"/>
<path d="M15 19 Q26 14 38 19 L37 27 Q26 22 16 27 Z" fill="#c8102e"/>
<text x="26.5" y="25.5" font-family="Liberation Sans" font-size="8" font-weight="700" fill="#fff" text-anchor="middle" font-style="italic">Lay's</text>
<path d="M20 35 h14" stroke="#cfe0ff" stroke-width="1"/>
<path d="M7 45 Q20 36 36 40 Q42 44 40 53 L8 53 Z" fill="#e0a860"/>
<path d="M30 42 L40 50" stroke="#d83a2a" stroke-width="2"/>
</svg>
<div class="t m" style="left:905px;top:742.2px;font-size:17.2px;line-height:22px;color:#15181c;">Lays New</div>
<div class="t " style="left:904.5px;top:763.0px;font-size:17.6px;line-height:22px;color:#767b84;">2345678654312</div>
<div class="t " style="left:1113px;top:753.5px;font-size:17px;line-height:21px;color:#1f2328;">Parle</div>
<div class="t " style="left:1250px;top:742.7px;font-size:17px;line-height:21px;color:#1f2328;">Snacks</div>
<div class="t " style="left:1250px;top:763.5px;font-size:17px;line-height:21px;color:#767b84;">Chips</div>
<div class="t " style="left:1035px;width:1000px;text-align:center;top:753.5px;font-size:17px;line-height:21px;color:#1f2328;">Product</div>
<div class="t " style="left:1171px;width:1000px;text-align:center;top:753.5px;font-size:17px;line-height:21px;color:#1f2328;">2 oz</div>
<div class="t " style="left:1291px;width:1000px;text-align:center;top:753.5px;font-size:17px;line-height:21px;color:#1f2328;"><span style="display:inline-block;width:14px;height:12px;vertical-align:baseline;background:linear-gradient(currentColor,currentColor) 0 6.3px/6px 1.7px no-repeat,linear-gradient(currentColor,currentColor) 7.6px 6.3px/6px 1.7px no-repeat"></span></div>
<div class="t " style="left:1397px;width:1000px;text-align:center;top:753.5px;font-size:17px;line-height:21px;color:#1f2328;">10 unit</div>
<div class="t " style="left:1515px;width:1000px;text-align:center;top:753.5px;font-size:17px;line-height:21px;color:#1f2328;">20 unit</div>
<div class="t " style="left:1654px;width:1000px;text-align:center;top:753.5px;font-size:17px;line-height:21px;color:#1f2328;"><span style="display:inline-block;width:14px;height:12px;vertical-align:baseline;background:linear-gradient(currentColor,currentColor) 0 6.3px/6px 1.7px no-repeat,linear-gradient(currentColor,currentColor) 7.6px 6.3px/6px 1.7px no-repeat"></span></div>
<div class="b" style="left:2243.5px;top:748px;width:84.0px;height:32px;background:#374151;border:1.6px solid #e3335a;border-radius:7px;"></div>
<div class="t sb" style="left:1785.5px;width:1000px;text-align:center;top:753.0px;font-size:17px;line-height:21px;color:#fff;">Expired</div>
<div class="b" style="left:2382.6px;top:756.15px;width:3.800000000000182px;height:3.900000000000091px;background:#111;border-radius:50%;"></div>
<div class="b" style="left:2382.6px;top:762.05px;width:3.800000000000182px;height:3.900000000000091px;background:#111;border-radius:50%;"></div>
<div class="b" style="left:2382.6px;top:767.9499999999999px;width:3.800000000000182px;height:3.900000000000091px;background:#111;border-radius:50%;"></div>
<div class="b" style="left:719px;top:877.5px;width:1705px;height:1.0px;background:#eceef1;"></div>
<div class="t " style="left:730px;top:829.5px;font-size:17px;line-height:21px;color:#1f2328;">#PD-074</div>
<svg class="b" style="left:842px;top:813px" width="53" height="54" viewBox="40 65 1110 1130">
<rect x="40" y="65" width="1110" height="1130" rx="150" fill="#eeeeee"/>
<g fill="#c9c9c9">
<path d="M245 465 L560 548 L560 935 L245 848 Z"/>
<path d="M615 548 L935 462 L935 840 L615 935 Z"/>
<path d="M250 408 L585 320 L690 347 L352 438 Z"/>
<path d="M505 470 L805 380 L935 414 L605 505 Z"/>
</g>
<path d="M340 450 L415 470 L415 632 L340 632 Z" fill="#eeeeee"/>
</svg>
<div class="t m" style="left:905px;top:818.2px;font-size:17.2px;line-height:22px;color:#15181c;">No Category</div>
<div class="t " style="left:904.5px;top:839.0px;font-size:17.6px;line-height:22px;color:#767b84;">4567809987654</div>
<div class="t " style="left:1113px;top:829.5px;font-size:17px;line-height:21px;color:#1f2328;">Test</div>
<div class="t " style="left:1250px;top:818.7px;font-size:17px;line-height:21px;color:#1f2328;"><span style="display:inline-block;width:14px;height:12px;vertical-align:baseline;background:linear-gradient(currentColor,currentColor) 0 6.3px/6px 1.7px no-repeat,linear-gradient(currentColor,currentColor) 7.6px 6.3px/6px 1.7px no-repeat"></span></div>
<div class="t " style="left:1250px;top:839.5px;font-size:17px;line-height:21px;color:#767b84;"><span style="display:inline-block;width:14px;height:12px;vertical-align:baseline;background:linear-gradient(currentColor,currentColor) 0 6.3px/6px 1.7px no-repeat,linear-gradient(currentColor,currentColor) 7.6px 6.3px/6px 1.7px no-repeat"></span></div>
<div class="t " style="left:1035px;width:1000px;text-align:center;top:829.5px;font-size:17px;line-height:21px;color:#1f2328;">Product</div>
<div class="t " style="left:1171px;width:1000px;text-align:center;top:829.5px;font-size:17px;line-height:21px;color:#1f2328;">2 oz</div>
<div class="t " style="left:1291px;width:1000px;text-align:center;top:829.5px;font-size:17px;line-height:21px;color:#1f2328;"><span style="display:inline-block;width:14px;height:12px;vertical-align:baseline;background:linear-gradient(currentColor,currentColor) 0 6.3px/6px 1.7px no-repeat,linear-gradient(currentColor,currentColor) 7.6px 6.3px/6px 1.7px no-repeat"></span></div>
<div class="t " style="left:1397px;width:1000px;text-align:center;top:829.5px;font-size:17px;line-height:21px;color:#1f2328;">10 unit</div>
<div class="t " style="left:1515px;width:1000px;text-align:center;top:829.5px;font-size:17px;line-height:21px;color:#1f2328;">20 unit</div>
<div class="t " style="left:1654px;width:1000px;text-align:center;top:829.5px;font-size:17px;line-height:21px;color:#1f2328;">2 unit</div>
<div class="b" style="left:2252px;top:823.8px;width:67px;height:32.0px;background:#12bb83;border:1px solid #34ca94;border-radius:7px;"></div>
<div class="t sb" style="left:1785.5px;width:1000px;text-align:center;top:828.8px;font-size:17px;line-height:21px;color:#fff;">Fresh</div>
<div class="b" style="left:2382.6px;top:832.15px;width:3.800000000000182px;height:3.900000000000091px;background:#111;border-radius:50%;"></div>
<div class="b" style="left:2382.6px;top:838.05px;width:3.800000000000182px;height:3.900000000000091px;background:#111;border-radius:50%;"></div>
<div class="b" style="left:2382.6px;top:843.9499999999999px;width:3.800000000000182px;height:3.900000000000091px;background:#111;border-radius:50%;"></div>
<div class="b" style="left:719px;top:953.5px;width:1705px;height:1.0px;background:#eceef1;"></div>
<div class="t " style="left:730px;top:905.5px;font-size:17px;line-height:21px;color:#1f2328;">#PD-073</div>
<svg class="b" style="left:842px;top:905px" width="53" height="22" viewBox="0 0 53 22">
<rect x="1" y="1" width="50" height="20" rx="1" fill="#e8501e"/>
<rect x="1" y="1" width="50" height="3" fill="#d8401a"/>
<ellipse cx="11" cy="10" rx="6" ry="3" fill="#3aa0d8" transform="rotate(-15 11 10)"/>
<path d="M22 5 h8" stroke="#f8e040" stroke-width="2.5"/>
<path d="M18 14 q10 -6 20 2" stroke="#f0a030" stroke-width="3" fill="none"/>
<circle cx="41" cy="10" r="4" fill="#f0c030"/>
<circle cx="43" cy="8" r="2.2" fill="#3a80d0"/>
<rect x="13" y="13" width="5" height="4" fill="#58c040"/>
</svg>
<div class="t m" style="left:905px;top:894.2px;font-size:17.2px;line-height:22px;color:#15181c;">Sunfeast Yipee No...</div>
<div class="t " style="left:904.5px;top:915.0px;font-size:17.6px;line-height:22px;color:#767b84;">461867852032</div>
<div class="t " style="left:1113px;top:905.5px;font-size:17px;line-height:21px;color:#1f2328;">Yippee</div>
<div class="t " style="left:1250px;top:894.7px;font-size:17px;line-height:21px;color:#1f2328;">Supply Accessories</div>
<div class="t " style="left:1250px;top:915.5px;font-size:17px;line-height:21px;color:#767b84;">Tea/Coffee Accessories</div>
<div class="t " style="left:1035px;width:1000px;text-align:center;top:905.5px;font-size:17px;line-height:21px;color:#1f2328;">Product</div>
<div class="t " style="left:1171px;width:1000px;text-align:center;top:905.5px;font-size:17px;line-height:21px;color:#1f2328;">2 oz</div>
<div class="t " style="left:1291px;width:1000px;text-align:center;top:905.5px;font-size:17px;line-height:21px;color:#1f2328;"><span style="display:inline-block;width:14px;height:12px;vertical-align:baseline;background:linear-gradient(currentColor,currentColor) 0 6.3px/6px 1.7px no-repeat,linear-gradient(currentColor,currentColor) 7.6px 6.3px/6px 1.7px no-repeat"></span></div>
<div class="t " style="left:1397px;width:1000px;text-align:center;top:905.5px;font-size:17px;line-height:21px;color:#1f2328;">10 unit</div>
<div class="t " style="left:1515px;width:1000px;text-align:center;top:905.5px;font-size:17px;line-height:21px;color:#1f2328;">20 unit</div>
<div class="t " style="left:1654px;width:1000px;text-align:center;top:905.5px;font-size:17px;line-height:21px;color:#1f2328;">2 unit</div>
<div class="b" style="left:2252px;top:899.8px;width:67px;height:32.0px;background:#12bb83;border:1px solid #34ca94;border-radius:7px;"></div>
<div class="t sb" style="left:1785.5px;width:1000px;text-align:center;top:904.8px;font-size:17px;line-height:21px;color:#fff;">Fresh</div>
<div class="b" style="left:2382.6px;top:908.15px;width:3.800000000000182px;height:3.900000000000091px;background:#111;border-radius:50%;"></div>
<div class="b" style="left:2382.6px;top:914.05px;width:3.800000000000182px;height:3.900000000000091px;background:#111;border-radius:50%;"></div>
<div class="b" style="left:2382.6px;top:919.9499999999999px;width:3.800000000000182px;height:3.900000000000091px;background:#111;border-radius:50%;"></div>
<div class="b" style="left:719px;top:1029.5px;width:1705px;height:1.0px;background:#eceef1;"></div>
<div class="t " style="left:730px;top:981.5px;font-size:17px;line-height:21px;color:#1f2328;">#PD-072</div>
<svg class="b" style="left:842px;top:965px" width="53" height="54" viewBox="40 65 1110 1130">
<rect x="40" y="65" width="1110" height="1130" rx="150" fill="#eeeeee"/>
<g fill="#c9c9c9">
<path d="M245 465 L560 548 L560 935 L245 848 Z"/>
<path d="M615 548 L935 462 L935 840 L615 935 Z"/>
<path d="M250 408 L585 320 L690 347 L352 438 Z"/>
<path d="M505 470 L805 380 L935 414 L605 505 Z"/>
</g>
<path d="M340 450 L415 470 L415 632 L340 632 Z" fill="#eeeeee"/>
</svg>
<div class="t m" style="left:905px;top:970.2px;font-size:17.2px;line-height:22px;color:#15181c;">Potato Chips</div>
<div class="t " style="left:904.5px;top:991.0px;font-size:17.6px;line-height:22px;color:#767b84;">7665434567</div>
<div class="t " style="left:1113px;top:981.5px;font-size:17px;line-height:21px;color:#1f2328;"><span style="display:inline-block;width:14px;height:12px;vertical-align:baseline;background:linear-gradient(currentColor,currentColor) 0 6.3px/6px 1.7px no-repeat,linear-gradient(currentColor,currentColor) 7.6px 6.3px/6px 1.7px no-repeat"></span></div>
<div class="t " style="left:1250px;top:970.7px;font-size:17px;line-height:21px;color:#1f2328;"><span style="display:inline-block;width:14px;height:12px;vertical-align:baseline;background:linear-gradient(currentColor,currentColor) 0 6.3px/6px 1.7px no-repeat,linear-gradient(currentColor,currentColor) 7.6px 6.3px/6px 1.7px no-repeat"></span></div>
<div class="t " style="left:1250px;top:991.5px;font-size:17px;line-height:21px;color:#767b84;"><span style="display:inline-block;width:14px;height:12px;vertical-align:baseline;background:linear-gradient(currentColor,currentColor) 0 6.3px/6px 1.7px no-repeat,linear-gradient(currentColor,currentColor) 7.6px 6.3px/6px 1.7px no-repeat"></span></div>
<div class="t " style="left:1035px;width:1000px;text-align:center;top:981.5px;font-size:17px;line-height:21px;color:#1f2328;">Product</div>
<div class="t " style="left:1171px;width:1000px;text-align:center;top:981.5px;font-size:17px;line-height:21px;color:#1f2328;">2 oz</div>
<div class="t " style="left:1291px;width:1000px;text-align:center;top:981.5px;font-size:17px;line-height:21px;color:#1f2328;"><span style="display:inline-block;width:14px;height:12px;vertical-align:baseline;background:linear-gradient(currentColor,currentColor) 0 6.3px/6px 1.7px no-repeat,linear-gradient(currentColor,currentColor) 7.6px 6.3px/6px 1.7px no-repeat"></span></div>
<div class="t " style="left:1397px;width:1000px;text-align:center;top:981.5px;font-size:17px;line-height:21px;color:#1f2328;">10 unit</div>
<div class="t " style="left:1515px;width:1000px;text-align:center;top:981.5px;font-size:17px;line-height:21px;color:#1f2328;">20 unit</div>
<div class="t " style="left:1654px;width:1000px;text-align:center;top:981.5px;font-size:17px;line-height:21px;color:#1f2328;">5 unit</div>
<div class="b" style="left:2243.5px;top:976px;width:84.0px;height:32px;background:#374151;border:1.6px solid #e3335a;border-radius:7px;"></div>
<div class="t sb" style="left:1785.5px;width:1000px;text-align:center;top:981.0px;font-size:17px;line-height:21px;color:#fff;">Expired</div>
<div class="b" style="left:2382.6px;top:984.15px;width:3.800000000000182px;height:3.900000000000091px;background:#111;border-radius:50%;"></div>
<div class="b" style="left:2382.6px;top:990.05px;width:3.800000000000182px;height:3.900000000000091px;background:#111;border-radius:50%;"></div>
<div class="b" style="left:2382.6px;top:995.9499999999999px;width:3.800000000000182px;height:3.900000000000091px;background:#111;border-radius:50%;"></div>
<div class="b" style="left:719px;top:1105.5px;width:1705px;height:1.0px;background:#eceef1;"></div>
<div class="t " style="left:730px;top:1057.5px;font-size:17px;line-height:21px;color:#1f2328;">#PD-071</div>
<svg class="b" style="left:842px;top:1041px" width="53" height="54" viewBox="0 0 53 54">
<path d="M10 1 L44 1 L44 52 L10 52 Z" fill="#f5d20e"/>
<rect x="18" y="6" width="18" height="9" rx="2" fill="#f8e030"/>
<ellipse cx="27" cy="10.5" rx="7.5" ry="3.5" fill="#e3221a"/>
<rect x="20" y="17" width="14" height="4" fill="#2a6ad0"/>
<rect x="17" y="23" width="20" height="3.5" fill="#e3221a" transform="rotate(-4 27 25)"/>
<ellipse cx="24" cy="36" rx="10" ry="8" fill="#d9a830"/>
<circle cx="22" cy="35" r="1.5" fill="#3a9a30"/><circle cx="27" cy="38" r="1.3" fill="#d84020"/>
<rect x="30" y="32" width="10" height="10" fill="#b8a890"/>
<circle cx="16" cy="43" r="5" fill="#f8e030"/>
</svg>
<div class="t m" style="left:905px;top:1046.2px;font-size:17.2px;line-height:22px;color:#15181c;">Maggi 2 Minute In...</div>
<div class="t " style="left:904.5px;top:1067.0px;font-size:17.6px;line-height:22px;color:#767b84;">028000336974</div>
<div class="t " style="left:1113px;top:1057.5px;font-size:17px;line-height:21px;color:#1f2328;"><span style="display:inline-block;width:14px;height:12px;vertical-align:baseline;background:linear-gradient(currentColor,currentColor) 0 6.3px/6px 1.7px no-repeat,linear-gradient(currentColor,currentColor) 7.6px 6.3px/6px 1.7px no-repeat"></span></div>
<div class="t " style="left:1250px;top:1046.7px;font-size:17px;line-height:21px;color:#1f2328;"><span style="display:inline-block;width:14px;height:12px;vertical-align:baseline;background:linear-gradient(currentColor,currentColor) 0 6.3px/6px 1.7px no-repeat,linear-gradient(currentColor,currentColor) 7.6px 6.3px/6px 1.7px no-repeat"></span></div>
<div class="t " style="left:1250px;top:1067.5px;font-size:17px;line-height:21px;color:#767b84;"><span style="display:inline-block;width:14px;height:12px;vertical-align:baseline;background:linear-gradient(currentColor,currentColor) 0 6.3px/6px 1.7px no-repeat,linear-gradient(currentColor,currentColor) 7.6px 6.3px/6px 1.7px no-repeat"></span></div>
<div class="t " style="left:1035px;width:1000px;text-align:center;top:1057.5px;font-size:17px;line-height:21px;color:#1f2328;">Product</div>
<div class="t " style="left:1171px;width:1000px;text-align:center;top:1057.5px;font-size:17px;line-height:21px;color:#1f2328;">2.5 oz</div>
<div class="t " style="left:1291px;width:1000px;text-align:center;top:1057.5px;font-size:17px;line-height:21px;color:#1f2328;"><span style="display:inline-block;width:14px;height:12px;vertical-align:baseline;background:linear-gradient(currentColor,currentColor) 0 6.3px/6px 1.7px no-repeat,linear-gradient(currentColor,currentColor) 7.6px 6.3px/6px 1.7px no-repeat"></span></div>
<div class="t " style="left:1397px;width:1000px;text-align:center;top:1057.5px;font-size:17px;line-height:21px;color:#1f2328;">1 unit</div>
<div class="t " style="left:1515px;width:1000px;text-align:center;top:1057.5px;font-size:17px;line-height:21px;color:#1f2328;">20 unit</div>
<div class="t " style="left:1654px;width:1000px;text-align:center;top:1057.5px;font-size:17px;line-height:21px;color:#1f2328;"><span style="display:inline-block;width:14px;height:12px;vertical-align:baseline;background:linear-gradient(currentColor,currentColor) 0 6.3px/6px 1.7px no-repeat,linear-gradient(currentColor,currentColor) 7.6px 6.3px/6px 1.7px no-repeat"></span></div>
<div class="b" style="left:2243.5px;top:1052px;width:84.0px;height:32px;background:#374151;border:1.6px solid #e3335a;border-radius:7px;"></div>
<div class="t sb" style="left:1785.5px;width:1000px;text-align:center;top:1057.0px;font-size:17px;line-height:21px;color:#fff;">Expired</div>
<div class="b" style="left:2382.6px;top:1060.1499999999999px;width:3.800000000000182px;height:3.900000000000091px;background:#111;border-radius:50%;"></div>
<div class="b" style="left:2382.6px;top:1066.05px;width:3.800000000000182px;height:3.900000000000091px;background:#111;border-radius:50%;"></div>
<div class="b" style="left:2382.6px;top:1071.95px;width:3.800000000000182px;height:3.900000000000091px;background:#111;border-radius:50%;"></div>
<div class="b" style="left:719px;top:1181.5px;width:1705px;height:1.0px;background:#eceef1;"></div>
<div class="t " style="left:730px;top:1133.5px;font-size:17px;line-height:21px;color:#1f2328;">#PD-070</div>
<svg class="b" style="left:842px;top:1135px" width="53" height="18" viewBox="0 0 53 18">
<rect x="2" y="2" width="49" height="15" fill="#f7f3e8"/>
<path d="M2 2 H38 L36 6 H2 Z" fill="#e8182c"/>
<rect x="36" y="1" width="15" height="16" fill="#3cb0e8"/>
<text x="20" y="12" font-family="Liberation Sans" font-size="7" font-weight="700" fill="#1a3a9a" text-anchor="middle" font-style="italic">milkybar</text>
<rect x="5" y="10" width="3" height="4" fill="#8a5a30"/>
<path d="M40 6h7 M40 10h7" stroke="#fff" stroke-width="1.5"/>
</svg>
<div class="t m" style="left:905px;top:1122.2px;font-size:17.2px;line-height:22px;color:#15181c;">Nestle Milkybar M...</div>
<div class="t " style="left:904.5px;top:1143.0px;font-size:17.6px;line-height:22px;color:#767b84;">000050426188</div>
<div class="t " style="left:1113px;top:1133.5px;font-size:17px;line-height:21px;color:#1f2328;">Nestle</div>
<div class="t " style="left:1250px;top:1122.7px;font-size:17px;line-height:21px;color:#1f2328;">Snacks CSV</div>
<div class="t " style="left:1250px;top:1143.5px;font-size:17px;line-height:21px;color:#767b84;">Candy bars</div>
<div class="t " style="left:1035px;width:1000px;text-align:center;top:1133.5px;font-size:17px;line-height:21px;color:#1f2328;">Product</div>
<div class="t " style="left:1171px;width:1000px;text-align:center;top:1133.5px;font-size:17px;line-height:21px;color:#1f2328;">25 oz</div>
<div class="t " style="left:1291px;width:1000px;text-align:center;top:1133.5px;font-size:17px;line-height:21px;color:#1f2328;"><span style="display:inline-block;width:14px;height:12px;vertical-align:baseline;background:linear-gradient(currentColor,currentColor) 0 6.3px/6px 1.7px no-repeat,linear-gradient(currentColor,currentColor) 7.6px 6.3px/6px 1.7px no-repeat"></span></div>
<div class="t " style="left:1397px;width:1000px;text-align:center;top:1133.5px;font-size:17px;line-height:21px;color:#1f2328;">10 unit</div>
<div class="t " style="left:1515px;width:1000px;text-align:center;top:1133.5px;font-size:17px;line-height:21px;color:#1f2328;">20 unit</div>
<div class="t " style="left:1654px;width:1000px;text-align:center;top:1133.5px;font-size:17px;line-height:21px;color:#1f2328;">3 unit</div>
<div class="b" style="left:2243.5px;top:1128px;width:84.0px;height:32px;background:#374151;border:1.6px solid #e3335a;border-radius:7px;"></div>
<div class="t sb" style="left:1785.5px;width:1000px;text-align:center;top:1133.0px;font-size:17px;line-height:21px;color:#fff;">Expired</div>
<div class="b" style="left:2382.6px;top:1136.1499999999999px;width:3.800000000000182px;height:3.900000000000091px;background:#111;border-radius:50%;"></div>
<div class="b" style="left:2382.6px;top:1142.05px;width:3.800000000000182px;height:3.900000000000091px;background:#111;border-radius:50%;"></div>
<div class="b" style="left:2382.6px;top:1147.95px;width:3.800000000000182px;height:3.900000000000091px;background:#111;border-radius:50%;"></div>
<div class="t " style="left:730px;top:1209.5px;font-size:17px;line-height:21px;color:#1f2328;">#PD-069</div>
<svg class="b" style="left:842px;top:1193px" width="53" height="54" viewBox="40 65 1110 1130">
<rect x="40" y="65" width="1110" height="1130" rx="150" fill="#eeeeee"/>
<g fill="#c9c9c9">
<path d="M245 465 L560 548 L560 935 L245 848 Z"/>
<path d="M615 548 L935 462 L935 840 L615 935 Z"/>
<path d="M250 408 L585 320 L690 347 L352 438 Z"/>
<path d="M505 470 L805 380 L935 414 L605 505 Z"/>
</g>
<path d="M340 450 L415 470 L415 632 L340 632 Z" fill="#eeeeee"/>
</svg>
<div class="t m" style="left:905px;top:1198.2px;font-size:17.2px;line-height:22px;color:#15181c;">Chocolate</div>
<div class="t " style="left:904.5px;top:1219.0px;font-size:17.6px;line-height:22px;color:#767b84;">2430083520</div>
<div class="t " style="left:1113px;top:1209.5px;font-size:17px;line-height:21px;color:#1f2328;">Amul</div>
<div class="t " style="left:1250px;top:1198.7px;font-size:17px;line-height:21px;color:#1f2328;">Snacks CSV</div>
<div class="t " style="left:1250px;top:1219.5px;font-size:17px;line-height:21px;color:#767b84;">Candy bars</div>
<div class="t " style="left:1035px;width:1000px;text-align:center;top:1209.5px;font-size:17px;line-height:21px;color:#1f2328;">Product</div>
<div class="t " style="left:1171px;width:1000px;text-align:center;top:1209.5px;font-size:17px;line-height:21px;color:#1f2328;">10 oz</div>
<div class="t " style="left:1291px;width:1000px;text-align:center;top:1209.5px;font-size:17px;line-height:21px;color:#1f2328;"><span style="display:inline-block;width:14px;height:12px;vertical-align:baseline;background:linear-gradient(currentColor,currentColor) 0 6.3px/6px 1.7px no-repeat,linear-gradient(currentColor,currentColor) 7.6px 6.3px/6px 1.7px no-repeat"></span></div>
<div class="t " style="left:1397px;width:1000px;text-align:center;top:1209.5px;font-size:17px;line-height:21px;color:#1f2328;">50 unit</div>
<div class="t " style="left:1515px;width:1000px;text-align:center;top:1209.5px;font-size:17px;line-height:21px;color:#1f2328;">20 unit</div>
<div class="t " style="left:1654px;width:1000px;text-align:center;top:1209.5px;font-size:17px;line-height:21px;color:#1f2328;">2 unit</div>
<div class="b" style="left:2243.5px;top:1204px;width:84.0px;height:32px;background:#374151;border:1.6px solid #e3335a;border-radius:7px;"></div>
<div class="t sb" style="left:1785.5px;width:1000px;text-align:center;top:1209.0px;font-size:17px;line-height:21px;color:#fff;">Expired</div>
<div class="b" style="left:2382.6px;top:1212.1499999999999px;width:3.800000000000182px;height:3.900000000000091px;background:#111;border-radius:50%;"></div>
<div class="b" style="left:2382.6px;top:1218.05px;width:3.800000000000182px;height:3.900000000000091px;background:#111;border-radius:50%;"></div>
<div class="b" style="left:2382.6px;top:1223.95px;width:3.800000000000182px;height:3.900000000000091px;background:#111;border-radius:50%;"></div>
<div class="t " style="left:1318px;top:1308.0px;font-size:18.6px;line-height:23px;color:#7a7f87;">1-10 of 78 Products</div>
<svg class="b" style="left:1503px;top:1310px;color:#7d828a;" width="18" height="18" viewBox="0 0 18 18" fill="none" stroke="currentColor" stroke-linecap="round" stroke-linejoin="round"><path d="M11.5 3.5L6 9l5.5 5.5" stroke-width="1.7"/></svg>
<div class="b" style="left:1544px;top:1301.5px;width:37px;height:37.0px;background:#fff;border:1.5px solid #a3b9b5;border-radius:7px;box-shadow:0 1px 2px rgba(0,0,0,.05);"></div>
<div class="t m" style="left:1062.5px;width:1000px;text-align:center;top:1309.0px;font-size:18px;line-height:22px;color:#858585;-webkit-text-stroke:0.5px #858585;">1</div>
<div class="b" style="left:1592px;top:1301.5px;width:37px;height:37.0px;background:#fff;border:1px solid #e8e8ea;border-radius:7px;box-shadow:0 1px 2px rgba(0,0,0,.06);"></div>
<div class="t m" style="left:1110.5px;width:1000px;text-align:center;top:1309.0px;font-size:18px;line-height:22px;color:#111;">2</div>
<div class="b" style="left:1640.3px;top:1301.5px;width:37.0px;height:37.0px;background:#fff;border:1px solid #e8e8ea;border-radius:7px;box-shadow:0 1px 2px rgba(0,0,0,.06);"></div>
<div class="t m" style="left:1158.8px;width:1000px;text-align:center;top:1309.0px;font-size:18px;line-height:22px;color:#111;">3</div>
<div class="b" style="left:1738.5px;top:1301.5px;width:37.0px;height:37.0px;background:#fff;border:1px solid #e8e8ea;border-radius:7px;box-shadow:0 1px 2px rgba(0,0,0,.06);"></div>
<div class="t m" style="left:1257.0px;width:1000px;text-align:center;top:1309.0px;font-size:18px;line-height:22px;color:#111;">8</div>
<div class="t m" style="left:1207.5px;width:1000px;text-align:center;top:1307.0px;font-size:19px;line-height:24px;color:#111;">...</div>
<svg class="b" style="left:1798px;top:1310px;color:#111;" width="18" height="18" viewBox="0 0 18 18" fill="none" stroke="currentColor" stroke-linecap="round" stroke-linejoin="round"><path d="M6.5 3.5L12 9l-5.5 5.5" stroke-width="1.8"/></svg>
</body></html>
